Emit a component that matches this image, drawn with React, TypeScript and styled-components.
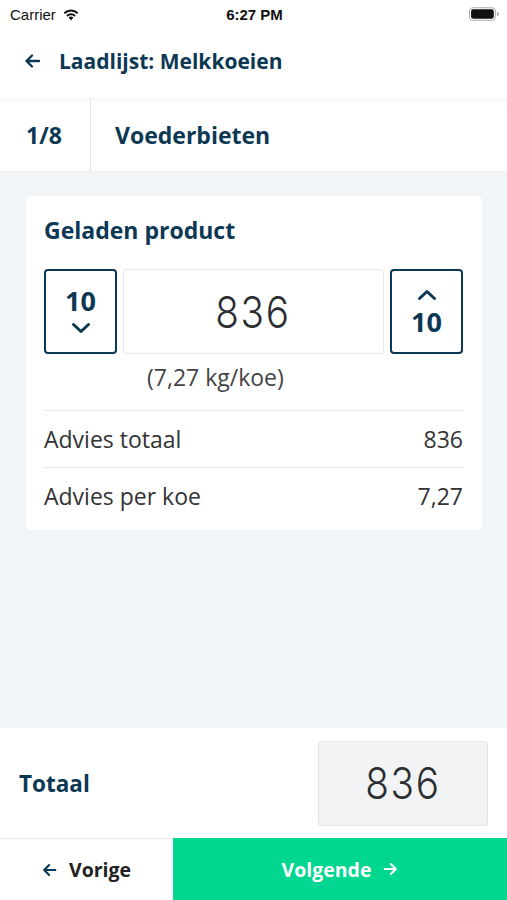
import styled, { createGlobalStyle } from "styled-components";

const GlobalStyle = createGlobalStyle`
    html, body {
        margin: 0;
        padding: 0;
        background: #ffffff;
    }
    * {
        box-sizing: border-box;
    }
`;

const navy = "#0c3854";
const green = "#00d68f";

const Screen = styled.div`
    width: 507px;
    height: 900px;
    display: flex;
    flex-direction: column;
    font-family: "Open Sans", "Noto Sans", sans-serif;
    background: #f2f5f8;
    overflow: hidden;
`;

const StatusBar = styled.div`
    height: 28px;
    background: #ffffff;
    display: grid;
    grid-template-columns: 1fr auto 1fr;
    align-items: center;
    padding: 0 8px 0 10px;
    font-family: "Liberation Sans", Arial, sans-serif;
    font-size: 15px;
    color: #111;
`;

const Carrier = styled.div`
    display: flex;
    align-items: center;
    gap: 6px;
`;

const Clock = styled.div`
    font-weight: 700;
    font-size: 15px;
`;

const Battery = styled.div`
    display: flex;
    justify-content: flex-end;
`;

const Header = styled.header`
    height: 70px;
    background: #ffffff;
    display: flex;
    align-items: center;
    padding: 0 0 4px 24px;
    gap: 17px;
`;

const Title = styled.h1`
    margin: 0;
    font-size: 21px;
    font-weight: 700;
    color: ${navy};
`;

const StepBar = styled.div`
    height: 74px;
    background: #ffffff;
    display: flex;
    box-shadow: inset 0 6px 6px -4px rgba(0, 0, 0, 0.05);
    border-bottom: 1px solid #eef1f4;
`;

const StepCount = styled.div`
    width: 91px;
    border-right: 1px solid #e2e5e8;
    display: flex;
    align-items: center;
    justify-content: center;
    font-size: 23px;
    font-weight: 700;
    color: ${navy};
    padding-right: 2px;
`;

const StepName = styled.div`
    display: flex;
    align-items: center;
    padding-left: 24px;
    font-size: 23px;
    font-weight: 700;
    color: ${navy};
`;

const Content = styled.main`
    flex: 1;
    padding: 24px 25px 0 26px;
`;

const Card = styled.section`
    background: #ffffff;
    border-radius: 5px;
    padding: 18px 19px 6px 18px;
`;

const CardTitle = styled.h2`
    margin: 0 0 22px;
    font-size: 23px;
    font-weight: 700;
    color: ${navy};
    line-height: 33px;
`;

const StepperRow = styled.div`
    display: flex;
    gap: 6px;
    height: 85px;
`;

const StepButton = styled.button<{ $up?: boolean }>`
    width: 73px;
    height: 85px;
    border: 2px solid ${navy};
    border-radius: 4px;
    background: #ffffff;
    color: ${navy};
    display: flex;
    flex-direction: ${(p) => (p.$up ? "column-reverse" : "column")};
    align-items: center;
    justify-content: center;
    gap: 7px;
    font-family: "Open Sans", sans-serif;
    font-size: 27px;
    font-weight: 700;
    padding: ${(p) => (p.$up ? "2px 0 0" : "0 0 2px")};
    line-height: 28px;
`;

const Display = styled.div<{ $muted?: boolean }>`
    flex: 1;
    display: flex;
    align-items: center;
    justify-content: center;
    border: 1px solid ${(p) => (p.$muted ? "#e2e4e6" : "#e6e8ea")};
    border-radius: 3px;
    background: ${(p) => (p.$muted ? "#f2f3f4" : "#ffffff")};
`;

const Segments = styled.span`
    font-family: Inter, "DejaVu Sans", sans-serif;
    font-size: 44px;
    font-weight: 300;
    color: #2b2e32;
    letter-spacing: 2px;
    transform: scaleX(0.88);
`;

const Note = styled.div`
    margin: 9px 0 19px 103px;
    font-size: 23px;
    color: #444;
    line-height: 28px;
`;

const InfoRow = styled.div`
    height: 57px;
    display: flex;
    align-items: center;
    justify-content: space-between;
    border-top: 1px solid #e5e7e9;
    font-size: 23px;
    color: #333;
`;

const Footer = styled.footer`
    height: 110px;
    background: #ffffff;
    display: flex;
    align-items: center;
    justify-content: space-between;
    padding: 0 19px;
`;

const TotalLabel = styled.div`
    font-size: 22.5px;
    font-weight: 700;
    color: ${navy};
    margin-top: 1px;
`;

const TotalBox = styled(Display)`
    flex: none;
    width: 170px;
    height: 85px;
`;

const NavBar = styled.nav`
    height: 62px;
    display: flex;
    background: #ffffff;
    border-top: 1px solid #e8eaec;
`;

const NavButton = styled.button<{ $primary?: boolean }>`
    width: ${(p) => (p.$primary ? "auto" : "173px")};
    flex: ${(p) => (p.$primary ? 1 : "none")};
    border: none;
    background: ${(p) => (p.$primary ? green : "#ffffff")};
    color: ${(p) => (p.$primary ? "#ffffff" : "#222")};
    display: flex;
    align-items: center;
    justify-content: center;
    gap: 11px;
    font-family: "Open Sans", sans-serif;
    font-size: 19.5px;
    font-weight: 700;
    padding: 0;
    margin-top: ${(p) => (p.$primary ? "-1px" : "0")};
`;

function Arrow({ dir = "left", color, size = 18 }: { dir?: "left" | "right"; color: string; size?: number }) {
    const d = dir === "left" ? "M15 9H3M8 3.5L2.5 9L8 14.5" : "M3 9H15M10 3.5L15.5 9L10 14.5";
    return (
        <svg width={size} height={size} viewBox="0 0 18 18" fill="none">
            <path d={d} stroke={color} strokeWidth="2.4" strokeLinecap="round" strokeLinejoin="round" />
        </svg>
    );
}

function Chevron({ up }: { up?: boolean }) {
    return (
        <svg width="20" height="12" viewBox="0 0 20 12" fill="none">
            <path
                d={up ? "M2.5 9.5L10 2.5L17.5 9.5" : "M2.5 2.5L10 9.5L17.5 2.5"}
                stroke={navy}
                strokeWidth="3"
                strokeLinecap="round"
                strokeLinejoin="round"
            />
        </svg>
    );
}

function App() {
    return (
        <Screen>
            <GlobalStyle />
            <StatusBar>
                <Carrier>
                    Carrier
                    <svg width="18" height="13" viewBox="0 0 16 12">
                        <path d="M8 11.5L10.2 8.8A3.3 3.3 0 0 0 5.8 8.8Z" fill="#111" />
                        <path d="M3.6 6.6A6.3 6.3 0 0 1 12.4 6.6L11.1 8A4.4 4.4 0 0 0 4.9 8Z" fill="#111" />
                        <path d="M1.2 4.2A9.6 9.6 0 0 1 14.8 4.2L13.5 5.6A7.6 7.6 0 0 0 2.5 5.6Z" fill="#111" />
                    </svg>
                </Carrier>
                <Clock>6:27 PM</Clock>
                <Battery>
                    <svg width="30" height="14" viewBox="0 0 29 13">
                        <rect x="0.5" y="0.5" width="25" height="12" rx="3.5" fill="none" stroke="#aaa" />
                        <rect x="2" y="2" width="22" height="9" rx="2" fill="#111" />
                        <path d="M27 4.5v4a2 2 0 0 0 0-4z" fill="#aaa" />
                    </svg>
                </Battery>
            </StatusBar>

            <Header>
                <Arrow color={navy} />
                <Title>Laadlijst: Melkkoeien</Title>
            </Header>

            <StepBar>
                <StepCount>1/8</StepCount>
                <StepName>Voederbieten</StepName>
            </StepBar>

            <Content>
                <Card>
                    <CardTitle>Geladen product</CardTitle>
                    <StepperRow>
                        <StepButton>
                            10
                            <Chevron />
                        </StepButton>
                        <Display>
                            <Segments>836</Segments>
                        </Display>
                        <StepButton $up>
                            10
                            <Chevron up />
                        </StepButton>
                    </StepperRow>
                    <Note>(7,27 kg/koe)</Note>
                    <InfoRow>
                        <span>Advies totaal</span>
                        <span>836</span>
                    </InfoRow>
                    <InfoRow>
                        <span>Advies per koe</span>
                        <span>7,27</span>
                    </InfoRow>
                </Card>
            </Content>

            <Footer>
                <TotalLabel>Totaal</TotalLabel>
                <TotalBox $muted>
                    <Segments>836</Segments>
                </TotalBox>
            </Footer>

            <NavBar>
                <NavButton>
                    <Arrow color={navy} size={16} />
                    Vorige
                </NavButton>
                <NavButton $primary>
                    Volgende
                    <Arrow dir="right" color="#ffffff" size={16} />
                </NavButton>
            </NavBar>
        </Screen>
    );
}

export default App;
